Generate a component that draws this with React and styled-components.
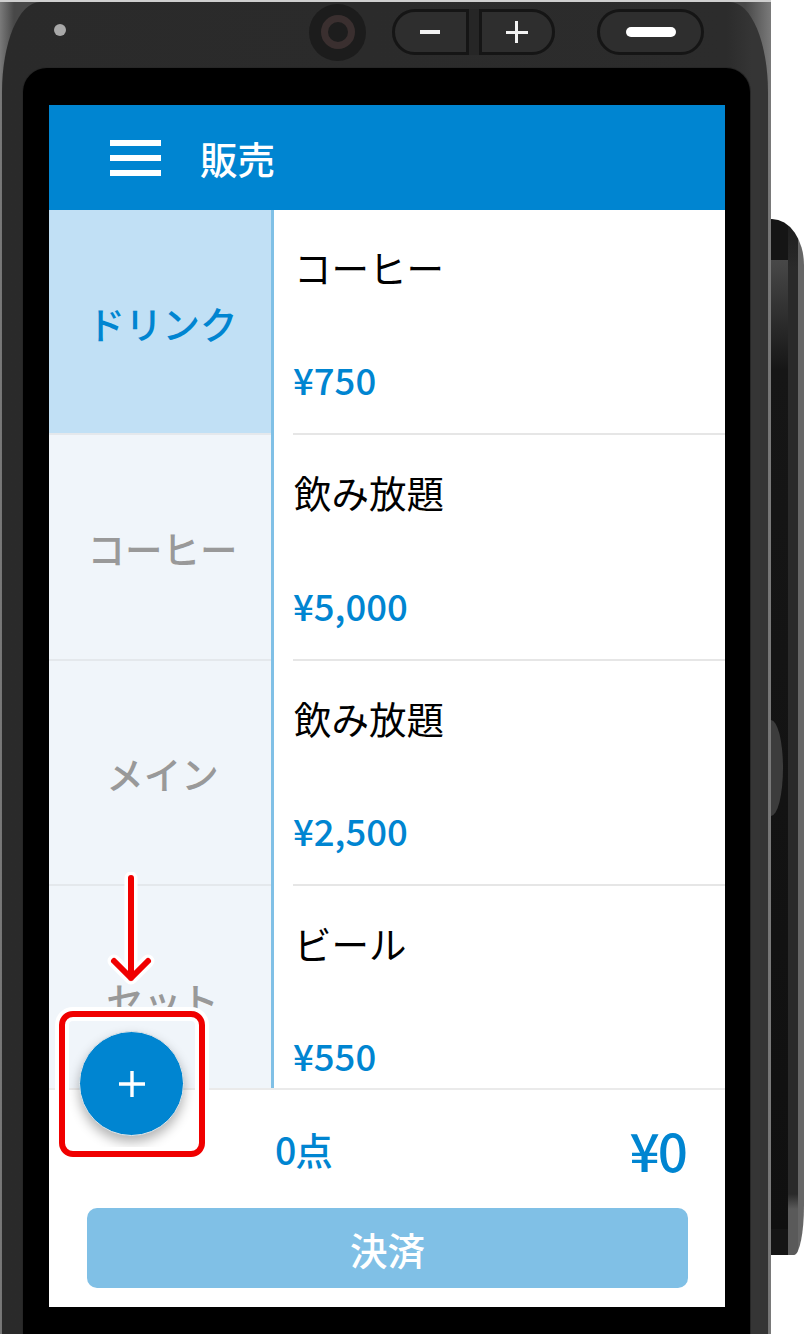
import styled, { createGlobalStyle } from "styled-components";

const BLUE = "#0085d1";
const FONT = `"Noto Sans CJK JP", "Noto Sans", sans-serif`;

const CATEGORIES = ["ドリンク", "コーヒー", "メイン", "セット"];
const PRODUCTS = [
  { name: "コーヒー", price: "¥750" },
  { name: "飲み放題", price: "¥5,000" },
  { name: "飲み放題", price: "¥2,500" },
  { name: "ビール", price: "¥550" },
];

const App = () => {
  return (
    <Stage>
      <GlobalStyle />
      <Device>
        <Shell>
          <TopBar>
            <Led />
            <Camera>
              <CameraRing />
            </Camera>
            <VolumeGroup>
              <VolumeKey $side="left">
                <MinusGlyph />
              </VolumeKey>
              <VolumeKey $side="right">
                <PlusGlyph />
              </VolumeKey>
            </VolumeGroup>
            <PowerKey>
              <PowerGlyph />
            </PowerKey>
          </TopBar>
          <Bezel>
            <Screen>
              <Header>
                <MenuIcon>
                  <span />
                  <span />
                  <span />
                </MenuIcon>
                <h1>販売</h1>
              </Header>

              <Main>
                <Sidebar>
                  {CATEGORIES.map((label, i) => (
                    <Category key={label} $active={i === 0}>
                      {label}
                    </Category>
                  ))}
                </Sidebar>
                <ProductList>
                  {PRODUCTS.map((p, i) => (
                    <Product key={i}>
                      <ProductName>{p.name}</ProductName>
                      <ProductPrice>{p.price}</ProductPrice>
                    </Product>
                  ))}
                </ProductList>
              </Main>

              <Footer>
                <Totals>
                  <Count>0点</Count>
                  <Amount>¥0</Amount>
                </Totals>
                <PayButton>決済</PayButton>
              </Footer>

              <Fab aria-label="add">
                <svg width="30" height="30" viewBox="0 0 30 30">
                  <path d="M15 2v26M2 15h26" stroke="#fff" strokeWidth="3.4" fill="none" />
                </svg>
              </Fab>
              <Highlight />
              <Arrow width="50" height="116" viewBox="0 0 50 116">
                <path
                  d="M25 6v100M8 89l17 17 17-17"
                  fill="none"
                  stroke="#fff"
                  strokeWidth="13"
                  strokeLinecap="round"
                  strokeLinejoin="round"
                />
                <path
                  d="M25 6v100M8 89l17 17 17-17"
                  fill="none"
                  stroke="#f00000"
                  strokeWidth="6"
                  strokeLinecap="round"
                  strokeLinejoin="round"
                />
              </Arrow>
            </Screen>
          </Bezel>
        </Shell>
      </Device>
      <SideGrip>
        <GripChannel>
          <GripCap $top />
          <GripTexture>
            <GripBump />
          </GripTexture>
          <GripCap />
        </GripChannel>
        <GripRail />
      </SideGrip>
    </Stage>
  );
};

export default App;

const GlobalStyle = createGlobalStyle`
  html, body {
    margin: 0;
    padding: 0;
    background: #fff;
  }
  * {
    box-sizing: border-box;
  }
`;

const Stage = styled.div`
  display: flex;
  align-items: flex-start;
  width: 804px;
  height: 1334px;
  overflow: hidden;
  font-family: ${FONT};
`;

const Device = styled.div`
  width: 771px;
  height: 1334px;
  flex-shrink: 0;
  padding: 2px 3px 0 2px;
  background:
    linear-gradient(#cfcfcf, #cfcfcf) top / 100% 2px no-repeat,
    linear-gradient(90deg, #7a7a7a 0, #484848 14px, #484848 745px, #7a7a7a 771px);
`;

const Shell = styled.div`
  height: 100%;
  background: linear-gradient(90deg, #2a2a2a 0, #2c2c2c 725px, #353535 750px, #353535 100%);
  border-radius: 38px 38px 0 0 / 90px 90px 0 0;
`;

const TopBar = styled.div`
  height: 66px;
  display: flex;
  align-items: center;
  padding: 0 0 6px 52px;
`;

const Led = styled.span`
  width: 12px;
  height: 12px;
  margin: -4px 243px 0 0;
  border-radius: 50%;
  background: #a8a8a8;
`;

const Camera = styled.span`
  width: 57px;
  height: 57px;
  display: grid;
  place-items: center;
  margin-right: 26px;
  border-radius: 50%;
  background: #1c1c1c;
`;

const CameraRing = styled.span`
  width: 34px;
  height: 34px;
  border-radius: 50%;
  background: #1d1d1d;
  border: 7px solid #3a2f2f;
`;

const VolumeGroup = styled.div`
  display: flex;
  width: 163px;
  height: 46px;
  margin-right: 42px;
  background: #262626;
  border-radius: 23px;
  gap: 10px;
`;

const VolumeKey = styled.span`
  flex: 1;
  display: grid;
  place-items: center;
  background: #2e2e2e;
  border: 3px solid #151515;
  border-radius: ${(p) => (p.$side === "left" ? "23px 0 0 23px" : "0 23px 23px 0")};
`;

const MinusGlyph = styled.span`
  width: 20px;
  height: 4px;
  background: #f2f2f2;
`;

const PlusGlyph = styled.span`
  width: 22px;
  height: 22px;
  background:
    linear-gradient(#f2f2f2, #f2f2f2) center / 22px 3px no-repeat,
    linear-gradient(#f2f2f2, #f2f2f2) center / 3px 22px no-repeat;
`;

const PowerKey = styled.span`
  width: 107px;
  height: 46px;
  display: grid;
  place-items: center;
  background: #2e2e2e;
  border: 3px solid #151515;
  border-radius: 23px;
`;

const PowerGlyph = styled.span`
  width: 50px;
  height: 10px;
  border-radius: 5px;
  background: #fff;
`;

const Bezel = styled.div`
  width: 727px;
  height: 1266px;
  margin-left: 21px;
  padding: 37px 25px 0 26px;
  background: #000;
  border-radius: 24px 24px 0 0;
  box-shadow: 0 0 0 1px #262626;
`;

const Screen = styled.div`
  position: relative;
  width: 676px;
  height: 1202px;
  display: flex;
  flex-direction: column;
  background: #fff;
`;

const Header = styled.header`
  height: 105px;
  flex-shrink: 0;
  display: flex;
  align-items: center;
  gap: 39px;
  padding: 0 0 0 61px;
  background: ${BLUE};
  color: #fff;

  h1 {
    margin: 0;
    font-size: 37.5px;
    font-weight: 500;
    line-height: 1;
  }
`;

const MenuIcon = styled.div`
  width: 51px;
  height: 36px;
  display: flex;
  flex-direction: column;
  justify-content: space-between;

  span {
    display: block;
    height: 6px;
    background: #fff;
  }
`;

const Main = styled.div`
  flex: 1;
  min-height: 0;
  display: flex;
  overflow: hidden;
`;

const Sidebar = styled.nav`
  width: 225px;
  flex-shrink: 0;
  border-right: 3px solid #80c0e6;
  background: #f0f5fa;
`;

const Category = styled.div`
  height: 225.3px;
  display: flex;
  align-items: center;
  justify-content: center;
  padding: 2px 0 0 5px;
  border-bottom: 2px solid #e4e8ec;
  background: ${(p) => (p.$active ? "#c1e0f5" : "transparent")};
  color: ${(p) => (p.$active ? BLUE : "#999")};
  font-size: 37.5px;
  font-weight: 500;
  line-height: 1;
  white-space: nowrap;
`;

const ProductList = styled.div`
  flex: 1;
  padding-left: 19px;
`;

const Product = styled.div`
  height: 225.3px;
  display: flex;
  flex-direction: column;
  border-bottom: 2px solid #e6e6e6;
`;

const ProductName = styled.div`
  margin: 32px 0 0 1px;
  color: #000;
  font-size: 37.5px;
  line-height: 50px;
`;

const ProductPrice = styled.div`
  margin: auto 0 28px;
  color: ${BLUE};
  font-size: 36.5px;
  font-weight: 500;
  line-height: 50px;
`;

const Footer = styled.footer`
  height: 219px;
  flex-shrink: 0;
  display: flex;
  flex-direction: column;
  padding: 0 37px 19px 38px;
  border-top: 2px solid #eaeaea;
`;

const Totals = styled.div`
  height: 118px;
  display: flex;
  align-items: center;
  justify-content: space-between;
  padding: 0 0 0 188px;
  color: ${BLUE};
  font-weight: 500;
`;

const Count = styled.span`
  font-size: 37.5px;
  line-height: 1;
  letter-spacing: -1px;
`;

const Amount = styled.span`
  margin-right: 2px;
  font-size: 53px;
  line-height: 1;
  letter-spacing: -2px;
`;

const PayButton = styled.button`
  height: 80px;
  width: 100%;
  padding: 0;
  border: 0;
  border-radius: 10px;
  background: #80c0e6;
  color: #fff;
  font-family: ${FONT};
  font-size: 37.5px;
  font-weight: 500;
`;

const Fab = styled.button`
  position: absolute;
  left: 30px;
  top: 926px;
  width: 105px;
  height: 105px;
  display: grid;
  place-items: center;
  padding: 0;
  border: 1px solid #e8e8e8;
  border-radius: 50%;
  background: ${BLUE};
  box-shadow: 0 6px 12px rgba(0, 0, 0, 0.3);
`;

const Highlight = styled.div`
  position: absolute;
  left: 10px;
  top: 906px;
  width: 146px;
  height: 146px;
  border: 6px solid #f00000;
  border-radius: 14px;
  box-shadow:
    0 0 0 4px #fff,
    inset 0 0 0 4px #fff;
`;

const Arrow = styled.svg`
  position: absolute;
  left: 57px;
  top: 767px;
`;

const SideGrip = styled.div`
  width: 33px;
  height: 1036px;
  margin-top: 219px;
  display: flex;
  overflow: hidden;
  border-radius: 0 32px 10px 0 / 0 46px 50px 0;
`;

const GripChannel = styled.div`
  width: 17px;
  flex-shrink: 0;
  display: flex;
  flex-direction: column;
`;

const GripCap = styled.div`
  height: ${(p) => (p.$top ? "41px" : "26px")};
  flex-shrink: 0;
  background: #151515;
`;

const GripTexture = styled.div`
  flex: 1;
  display: flex;
  align-items: center;
  background: linear-gradient(180deg, #484848 0, #161616 110px, #101010 100%);
`;

const GripBump = styled.div`
  width: 12px;
  height: 96px;
  margin-top: 46px;
  background: #3c3c3c;
  border-radius: 0 12px 12px 0 / 0 48px 48px 0;
`;

const GripRail = styled.div`
  flex: 1;
  border-right: 6px solid #666;
  background: linear-gradient(180deg, #1d1d1d 0, #2a2a2a 50px, #2a2a2a 975px, #5a5a5a 990px, #5a5a5a 100%);
`;
